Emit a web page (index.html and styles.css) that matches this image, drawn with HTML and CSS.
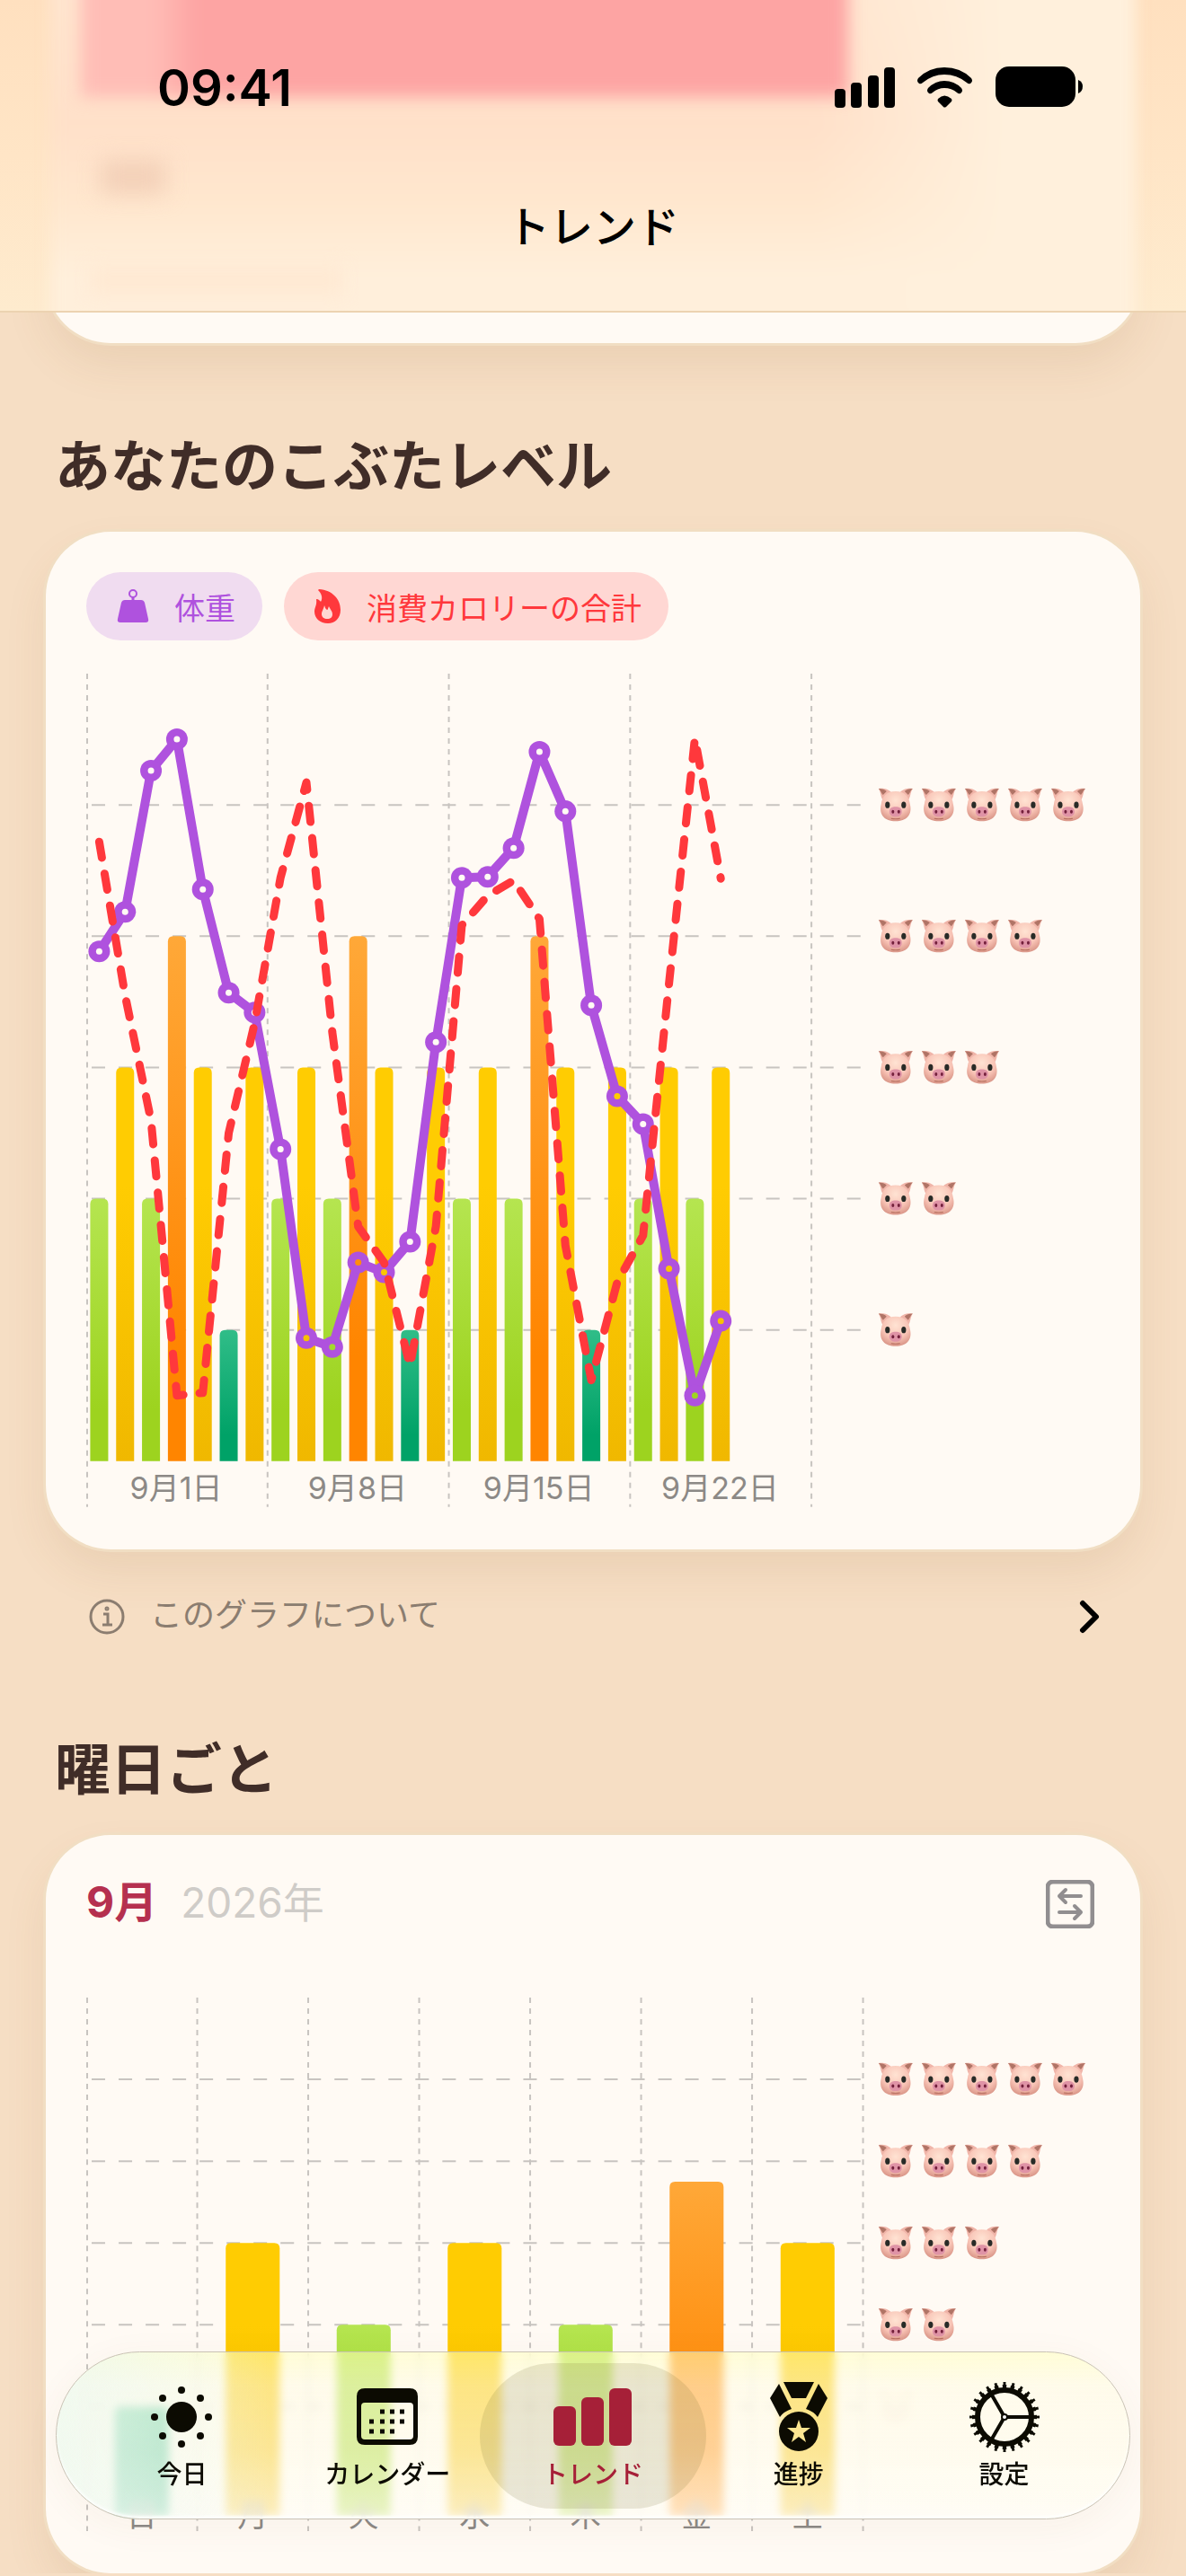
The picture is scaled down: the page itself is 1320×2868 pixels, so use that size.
FILE: index.html
```html
<!DOCTYPE html>
<html lang="ja">
<head>
  <meta charset="UTF-8">
  <meta name="viewport" content="width=device-width, initial-scale=1.0">
  <title>トレンド</title>
  <link rel="stylesheet" href="styles.css">
</head>
<body>

<!-- 共通のアイコンとグラデーション -->
<svg class="defs" width="0" height="0" aria-hidden="true">
  <defs>
    <linearGradient id="fill1" x1="0" y1="0" x2="0" y2="1">
      <stop offset="0" stop-color="#30bd88"/><stop offset=".8" stop-color="#00a267"/>
    </linearGradient>
    <linearGradient id="fill2" x1="0" y1="0" x2="0" y2="1">
      <stop offset="0" stop-color="#b5e550"/><stop offset=".8" stop-color="#9dd31f"/>
    </linearGradient>
    <linearGradient id="fill3" x1="0" y1="0" x2="0" y2="1">
      <stop offset=".3" stop-color="#ffcc02"/><stop offset="1" stop-color="#f0b800"/>
    </linearGradient>
    <linearGradient id="fill4" x1="0" y1="0" x2="0" y2="1">
      <stop offset="0" stop-color="#ffa838"/><stop offset=".8" stop-color="#ff8500"/>
    </linearGradient>
    <radialGradient id="pigFace" cx=".5" cy=".3" r=".8">
      <stop offset="0" stop-color="#ffe3d3"/><stop offset=".55" stop-color="#f8c3b5"/><stop offset="1" stop-color="#cf8678"/>
    </radialGradient>
    <symbol id="pig" viewBox="0 0 40 38">
      <path d="M1 1C5 0 12 1 15 5L6 14C3 10 4 6 1 1Z" fill="#f0b5a9"/>
      <path d="M39 1C35 0 28 1 25 5L34 14C37 10 36 6 39 1Z" fill="#f0b5a9"/>
      <path d="M1 1C5 1 8 2 10 4L6 8C4 6 4 4 1 1Z" fill="#b07466"/>
      <path d="M39 1C35 1 32 2 30 4L34 8C36 6 36 4 39 1Z" fill="#b07466"/>
      <path d="M20 4C30 4 35 10 36 18C39 30 32 37 20 37C8 37 1 30 4 18C5 10 10 4 20 4Z" fill="url(#pigFace)"/>
      <ellipse cx="11" cy="19" rx="2.6" ry="3.6" fill="#282b27"/>
      <ellipse cx="29" cy="19" rx="2.6" ry="3.6" fill="#282b27"/>
      <rect x="13" y="21" width="14" height="11" rx="5.5" fill="#df93a6"/>
      <ellipse cx="17" cy="26.5" rx="1.5" ry="2" fill="#74203c"/>
      <ellipse cx="23.5" cy="26.5" rx="1.5" ry="2" fill="#74203c"/>
      <path d="M15 34Q20 35 25 34" fill="none" stroke="#b87060"/>
    </symbol>
  </defs>
</svg>

<header class="top-bar">
  <div class="backdrop" aria-hidden="true">
    <div class="blur-card"></div>
    <div class="blur-bar"></div>
    <div class="blur-label"></div>
    <div class="blur-note"></div>
  </div>
  <div class="status">
    <span class="time">09:41</span>
    <svg width="276" height="48" viewBox="0 0 276 48" aria-hidden="true">
      <rect x="0" y="25" width="12" height="21" rx="4"/>
      <rect x="18" y="18" width="12" height="28" rx="4"/>
      <rect x="37" y="10" width="12" height="36" rx="4"/>
      <rect x="55" y="1" width="12" height="45" rx="4"/>
      <path d="M93 18Q91 16 93 13Q105 1 122 1Q140 1 152 13Q154 16 152 18L151 19Q149 20 147 18Q136 9 122 9Q109 9 98 18Q96 20 94 19Z"/>
      <path d="M104 29Q102 27 104 24Q112 16 122 16Q133 16 141 24Q143 27 141 29L140 30Q138 31 136 29Q130 24 122 24Q115 24 109 29Q107 31 105 30Z"/>
      <path d="M115 36Q122 29 130 36Q131 38 130 39L124 45Q122 46 121 45L115 39Q114 38 115 36Z"/>
      <rect x="179" y="0" width="89" height="45" rx="15"/>
      <path d="M271 15Q276 17 276 22Q276 28 271 30Z"/>
    </svg>
  </div>
  <h1>トレンド</h1>
</header>

<main>
  <div class="card previous"></div>

  <section>
    <h2>あなたのこぶたレベル</h2>
    <div class="card">
      <div class="legend">
        <span class="pill weight">
          <svg width="36" height="38" viewBox="0 0 36 38" aria-hidden="true">
            <circle cx="18" cy="5" r="4" fill="none" stroke="currentColor" stroke-width="2"/>
            <path d="M18 9V13" stroke="currentColor" stroke-width="3"/>
            <path d="M9 12H27Q30 12 31 15L35 33Q36 37 32 37H4Q0 37 1 33L5 15Q6 12 9 12Z" fill="currentColor"/>
          </svg>
          体重
        </span>
        <span class="pill burn">
          <svg width="30" height="38" viewBox="0 0 30 38" aria-hidden="true">
            <path fill="currentColor" fill-rule="evenodd" d="M5 0C20 1 29 11 29 23C29 32 23 38 15 38C6 38 0 32 0 25C0 20 3 18 2 11C5 11 6 13 7 14C10 9 7 4 4 1Z M11 18C10 23 8 24 8 28C8 31 11 33 14 33C18 33 20 31 20 28C20 24 17 22 16 19C15 21 15 23 14 23C12 22 12 20 11 18Z"/>
          </svg>
          消費カロリーの合計
        </span>
      </div>
      <svg class="chart" id="levelChart" viewBox="0 0 1127 928" role="img" aria-label="こぶたレベルの推移"></svg>
    </div>
    <a class="about" href="#about">
      <svg width="40" height="40" viewBox="0 0 40 40" fill="none" stroke="currentColor" stroke-width="3" aria-hidden="true">
        <circle cx="20" cy="20" r="18"/>
        <path d="M16 17H21V29M15 29H26"/>
        <circle cx="20" cy="11" r="1" stroke-width="3"/>
      </svg>
      <span>このグラフについて</span>
      <svg class="chevron" width="24" height="40" viewBox="0 0 24 40" aria-hidden="true">
        <path d="M4 5L19 20L4 35" fill="none" stroke="#000" stroke-width="6" stroke-linecap="round" stroke-linejoin="round"/>
      </svg>
    </a>
  </section>

  <section>
    <h2>曜日ごと</h2>
    <div class="card">
      <div class="month">
        <strong>9月</strong>
        <span>2026年</span>
        <button type="button" class="swap" aria-label="切り替え">
          <svg width="54" height="54" viewBox="0 0 54 54" fill="none" stroke="currentColor" stroke-width="4" stroke-linecap="round" stroke-linejoin="round" aria-hidden="true">
            <rect x="2" y="2" width="50" height="50" rx="6" stroke-width="5"/>
            <path d="M39 18H15M22 11L15 18L22 25M15 36H39M32 29L39 36L32 43"/>
          </svg>
        </button>
      </div>
      <svg class="chart weekday" id="weekdayChart" viewBox="0 0 1127 594" role="img" aria-label="曜日ごとのこぶたレベル"></svg>
    </div>
  </section>
</main>

<nav class="tabs">
  <a href="#today">
    <svg width="80" height="80" viewBox="0 0 80 80" aria-hidden="true">
      <circle cx="40" cy="40" r="17"/>
      <circle cx="40" cy="10" r="4"/><circle cx="40" cy="70" r="4"/>
      <circle cx="10" cy="40" r="4"/><circle cx="70" cy="40" r="4"/>
      <circle cx="19" cy="19" r="4"/><circle cx="61" cy="19" r="4"/>
      <circle cx="19" cy="61" r="4"/><circle cx="61" cy="61" r="4"/>
    </svg>
    今日
  </a>
  <a href="#calendar">
    <svg width="80" height="80" viewBox="0 0 80 80" aria-hidden="true">
      <path fill-rule="evenodd" d="M15 8H65Q74 8 74 17V62Q74 71 65 71H15Q6 71 6 62V17Q6 8 15 8Z M15 24Q11 24 11 28V61Q11 65 15 65H65Q69 65 69 61V28Q69 24 65 24Z"/>
      <path d="M32 34H37M43 34H48M54 34H59M20 45H25M32 45H37M43 45H48M54 45H59M20 56H25M32 56H37M43 56H48" stroke="currentColor" stroke-width="5"/>
    </svg>
    カレンダー
  </a>
  <a href="#trend" class="active" aria-current="page">
    <svg width="88" height="80" viewBox="0 0 88 80" aria-hidden="true">
      <rect x="0" y="28" width="25" height="44" rx="6"/>
      <rect x="31" y="18" width="25" height="54" rx="6"/>
      <rect x="62" y="8" width="25" height="64" rx="6"/>
    </svg>
    トレンド
  </a>
  <a href="#progress">
    <svg width="80" height="80" viewBox="0 0 80 80" aria-hidden="true">
      <path d="M23 1H57L48 19H32Z M18 3L32 31Q23 34 19 40L8 19Z M62 3L48 31Q57 34 61 40L72 19Z"/>
      <path fill-rule="evenodd" d="M40 34A22 22 0 1 1 40 78A22 22 0 1 1 40 34Z M40 43L37 52H27L35 58L32 68L40 62L48 68L45 58L53 52H43Z"/>
    </svg>
    進捗
  </a>
  <a href="#settings">
    <svg width="80" height="80" viewBox="0 0 80 80" fill="none" stroke="currentColor" aria-hidden="true">
      <circle cx="40" cy="40" r="30" stroke-width="6"/>
      <circle cx="40" cy="40" r="34" stroke-width="4" pathLength="240" stroke-dasharray="5 5" stroke-dashoffset="2.5"/>
      <circle cx="40" cy="40" r="36.5" stroke-width="5" pathLength="240" stroke-dasharray="3 7" stroke-dashoffset="1.5"/>
      <path d="M40 40H69M40 40L25 14M40 40L25 66" stroke-width="4"/>
      <circle cx="40" cy="40" r="3" fill="#fff" stroke-width="2"/>
    </svg>
    設定
  </a>
</nav>

<script>
  const SVG_NS = "http://www.w3.org/2000/svg";

  // 日ごとのレベル（1〜5）と折れ線の高さ
  const levels = [2, 3, 2, 4, 3, 1, 3, 2, 3, 2, 4, 3, 1, 3, 2, 3, 2, 4, 3, 1, 3, 2, 3, 2, 3];
  const weight = [310, 266, 109, 74, 241, 356, 378, 530, 740, 750, 656, 667, 633, 411, 228, 227, 195, 88, 154, 370, 471, 502, 663, 804, 721];
  const burned = [188, 359, 498, 804, 801, 512, 390, 228, 122, 400, 616, 656, 771, 616, 281, 248, 231, 274, 637, 787, 678, 626, 346, 73, 229];

  // 日曜から土曜までの平均
  const weekdays = [
    ["日", 1], ["月", 3], ["火", 2], ["水", 3], ["木", 2], ["金", 3.75], ["土", 3]
  ];

  function add(parent, name, attrs, text) {
    const el = document.createElementNS(SVG_NS, name);
    Object.entries(attrs).forEach(([k, v]) => el.setAttribute(k, v));
    if (text) el.textContent = text;
    parent.appendChild(el);
    return el;
  }

  // 横線とこぶたの目盛り
  function drawLevels(svg, base, step) {
    for (let level = 1; level <= 5; level++) {
      const y = base - level * step;
      add(svg, "path", { d: `M6 ${y}H876`, class: "grid-h" });
      for (let i = 0; i < level; i++) {
        add(svg, "use", { href: "#pig", x: 880 + i * 48, y: y - 19, width: 40, height: 38, class: `pig-${level}` });
      }
    }
  }

  function drawBar(svg, cx, width, base, height, fill) {
    const r = 6;
    const x = cx - width / 2;
    const top = base - height;
    add(svg, "path", {
      d: `M${x} ${base}V${top + r}Q${x} ${top} ${x + r} ${top}H${x + width - r}Q${x + width} ${top} ${x + width} ${top + r}V${base}Z`,
      fill: `url(#fill${fill})`
    });
  }

  function drawLevelChart() {
    const svg = document.getElementById("levelChart");
    const week = 201.6;
    const day = week / 7;
    const cx = i => day * (i + 0.5);

    for (let i = 0; i <= 4; i++) {
      add(svg, "path", { d: `M${Math.max(1, i * week)} 1V928`, class: "grid-v" });
    }
    drawLevels(svg, 877, 146);
    levels.forEach((level, i) => drawBar(svg, cx(i), 20, 877, level * 146, level));

    // 丸の中を抜いて後ろの棒を見せる
    const mask = add(svg, "mask", { id: "holes", maskUnits: "userSpaceOnUse", x: 0, y: 0, width: 1127, height: 928 });
    add(mask, "rect", { width: 1127, height: 928, fill: "#fff" });
    const group = add(svg, "g", { mask: "url(#holes)", class: "weight-line" });
    add(group, "polyline", { points: weight.map((y, i) => `${cx(i)},${y}`).join(" ") });
    weight.forEach((y, i) => {
      add(group, "circle", { cx: cx(i), cy: y, r: 12 });
      add(mask, "circle", { cx: cx(i), cy: y, r: 3.5, fill: "#000" });
    });

    add(svg, "polyline", { points: burned.map((y, i) => `${cx(i)},${y}`).join(" "), class: "burned-line" });
    ["9月1日", "9月8日", "9月15日", "9月22日"].forEach((label, i) => {
      add(svg, "text", { x: i * week + 100, y: 919 }, label);
    });
  }

  function drawWeekdayChart() {
    const svg = document.getElementById("weekdayChart");
    const col = 123.4;
    const base = 546;
    const step = 91;
    const foot = 30; // タブバーの下まで棒を伸ばす
    for (let i = 0; i <= 7; i++) {
      add(svg, "path", { d: `M${Math.max(1, i * col)} 0V594`, class: "grid-v" });
    }
    drawLevels(svg, base, step);
    weekdays.forEach(([label, value], i) => {
      const cx = col * (i + 0.5);
      drawBar(svg, cx, 60, base + foot, value * step + foot, Math.round(value));
      add(svg, "text", { x: cx, y: 588 }, label);
    });
  }

  drawLevelChart();
  drawWeekdayChart();
</script>

</body>
</html>
```
FILE: styles.css
```css
* {
  box-sizing: border-box;
}
body {
  margin: 0;
  font-family: Inter, "Noto Sans CJK JP", sans-serif;
  background: #f6dec4;
  color: #402d28;
}
h1, h2 {
  margin: 0;
}
.defs {
  position: absolute;
}

/* 上部バー */
.top-bar {
  position: fixed;
  top: 0;
  left: 0;
  right: 0;
  z-index: 2;
  height: 348px;
  overflow: hidden;
  background: linear-gradient(#ffe0bf, #ffe5c6 50%, #feebce);
  border-bottom: 2px solid #ecd3b1;
  color: #000;
}
.backdrop {
  position: absolute;
  inset: 0;
  z-index: -1;
}
.backdrop div {
  position: absolute;
}
.blur-card {
  inset: -40px 56px -40px 56px;
  background: linear-gradient(#ffe6d0 0, #ffe0c9 42%, #ffe7ce 62%, #ffefdb 82%);
  filter: blur(8px);
}
.blur-card::after {
  content: "";
  position: absolute;
  inset: 0 0 40px 70%;
  background: linear-gradient(to right, transparent, #fff0dc 60%);
}
.blur-bar {
  top: -40px;
  left: 90px;
  right: 376px;
  height: 148px;
  background: linear-gradient(to right, #ffbdb6 80px, #fda4a3 130px);
  filter: blur(9px);
}
.blur-label {
  top: 178px;
  left: 112px;
  width: 72px;
  height: 38px;
  background: #f3d0b8;
  filter: blur(12px);
}
.blur-note {
  top: 296px;
  left: 100px;
  width: 282px;
  height: 32px;
  background: #ffe9d3;
  filter: blur(10px);
}
.status {
  display: flex;
  justify-content: space-between;
  align-items: center;
  height: 196px;
  padding: 0 115px 0 175px;
}
.time {
  font-size: 56px;
  font-weight: 600;
}
.top-bar h1 {
  font-size: 48px;
  font-weight: 500;
  line-height: 114px;
  text-align: center;
}

/* カード */
main {
  padding: 200px 51px 0;
}
h2 {
  margin: 102px 10px 36px;
  font-size: 62px;
  font-weight: 600;
  line-height: 72px;
}
.card {
  padding: 45px 45px 47px;
  border-radius: 72px;
  background: #fffaf4;
  box-shadow: 0 0 0 3px #f1dec3, 0 24px 48px rgba(140, 90, 40, .1);
}
.previous {
  padding: 91px;
}
.legend {
  display: flex;
  gap: 24px;
}
.pill {
  display: flex;
  align-items: center;
  gap: 28px;
  height: 76px;
  padding: 0 30px 0 34px;
  border-radius: 38px;
  font-size: 34px;
}
.weight {
  background: #f0dcf0;
  color: #af52de;
}
.burn {
  background: #ffd7d3;
  color: #ff383c;
}
.about {
  display: flex;
  align-items: center;
  gap: 28px;
  height: 66px;
  margin-top: 42px;
  padding: 0 44px 0 48px;
  color: #8b7d70;
  font-size: 36px;
  line-height: 64px;
  text-decoration: none;
}
.about span {
  padding-bottom: 4px;
}
.chevron {
  margin-left: auto;
}
.month {
  display: flex;
  align-items: center;
  gap: 26px;
  height: 64px;
  font-size: 46px;
  line-height: 60px;
}
.month strong {
  color: #b5304f;
  font-size: 48px;
  font-weight: 700;
}
.month strong, .month span {
  padding-bottom: 4px;
}
.month span {
  color: #cfccc8;
  font-weight: 400;
}
.swap {
  margin-left: auto;
  margin-right: 6px;
  padding: 0;
  border: none;
  background: none;
  color: #918e90;
  line-height: 0;
}

/* グラフ */
.chart {
  display: block;
  width: 100%;
  height: auto;
  margin-top: 36px;
}
.weekday {
  margin-top: 72px;
}
.chart text {
  fill: #8c8986;
  font-size: 34px;
  text-anchor: middle;
}
.grid-h, .grid-v {
  fill: none;
  stroke: #c8c4c0;
  stroke-width: 2;
}
.grid-h {
  stroke-dasharray: 15 15;
}
.grid-v {
  stroke-dasharray: 6 6;
}
.weight-line polyline {
  fill: none;
  stroke: #af52de;
  stroke-width: 10;
  stroke-linejoin: round;
}
.weight-line circle {
  fill: #af52de;
}
.burned-line {
  fill: none;
  stroke: #ff383c;
  stroke-width: 9;
  stroke-linecap: round;
  stroke-linejoin: round;
  stroke-dasharray: 18 18;
}
.weekday .pig-1 {
  opacity: .1;
}

/* タブバー */
.tabs {
  position: fixed;
  left: 62px;
  right: 62px;
  bottom: 63px;
  z-index: 2;
  display: flex;
  align-items: center;
  height: 187px;
  padding: 0 25px;
  border: 1px solid #c9c2b4;
  border-radius: 94px;
  background: linear-gradient(to right, rgba(235, 248, 240, .7), rgba(255, 250, 240, 0) 20%), linear-gradient(rgba(255, 255, 190, .55), rgba(255, 252, 228, .58) 20%, rgba(255, 252, 235, .64) 60%, rgba(255, 253, 245, .78));
  backdrop-filter: blur(5px);
  box-shadow: inset 0 -3px 3px rgba(255, 255, 255, .7), 0 8px 40px rgba(120, 80, 40, .05);
}
.tabs a {
  position: relative;
  display: flex;
  flex: 1;
  flex-direction: column;
  align-items: center;
  gap: 4px;
  height: 162px;
  padding-top: 20px;
  color: #0c0b02;
  font-size: 28px;
  font-weight: 500;
  line-height: 40px;
  text-decoration: none;
  white-space: nowrap;
}
.tabs svg {
  fill: currentColor;
}
.tabs svg[fill="none"] {
  fill: none;
}
.tabs .active {
  color: #a62038;
}
/* 選択中のタブは隣に少しはみ出す */
.tabs .active::before {
  content: "";
  position: absolute;
  inset: 0 -12px;
  z-index: -1;
  border-radius: 81px;
  background: rgba(110, 100, 40, .15);
}
```
